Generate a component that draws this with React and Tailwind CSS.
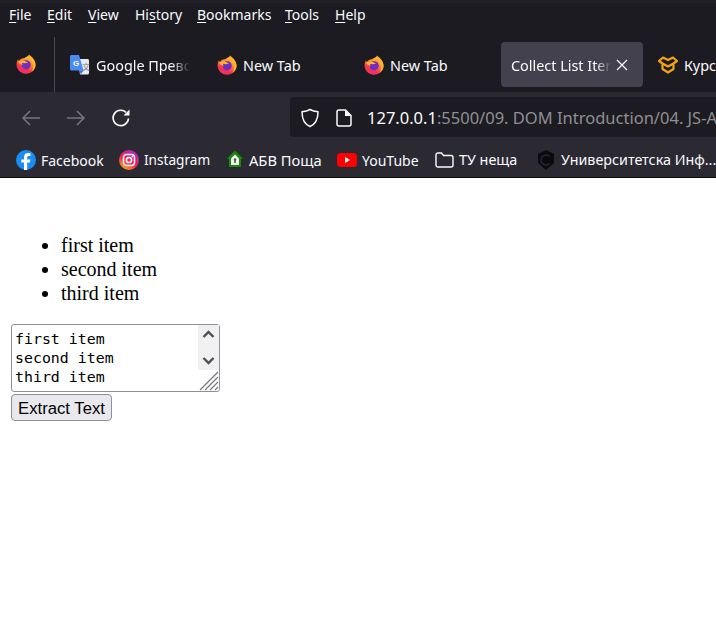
import React from "react";

const ui = { fontFamily: '"Noto Sans", sans-serif' };

function Firefox({ className = "" }) {
  return (
    <svg viewBox="0 0 20 20" width="20" height="20" className={className}>
      <defs>
        <linearGradient id="ffg" x1="0.75" y1="0" x2="0.25" y2="1">
          <stop offset="0" stopColor="#ffd23d" />
          <stop offset="0.4" stopColor="#ff8a2a" />
          <stop offset="0.75" stopColor="#f5304f" />
          <stop offset="1" stopColor="#f0307a" />
        </linearGradient>
      </defs>
      <path d="M13 .5c.4 2 1.600 2.600 3 4.300C17.900 6.800 19.500 8.500 19.500 10.800 19.500 16 15.300 19.700 10 19.700 4.700 19.700.5 15.500.5 10.300.5 8.500 1 6.600 2 5.200l.8 2C4 5 6 4 8 4.200 10 2.500 12.500 2.500 13 .5z" fill="url(#ffg)" />
      <circle cx="10.200" cy="10.800" r="4.600" fill="#6c2fc0" />
      <path d="M2 7.500C4 6.300 6.500 6 9 7l3 1.500c-2.500 1-4.500 1-6 .3L6.500 11C4.500 10.500 3 9.300 2 7.500z" fill="#ffb13a" />
      <path d="M13 .5c3 2.500 6.500 5.500 6.500 10.300 0 3-1.500 5.500-4 7 1.500-2 2-4.500 1.500-7-.5-3-3.500-6-4-10.300z" fill="#ffb52e" />
    </svg>
  );
}

function Translate() {
  return (
    <svg viewBox="0 0 20 20" width="20" height="20">
      <path d="M8 4h9.500c.8 0 1.500.7 1.500 1.500V18c0 .8-.7 1.500-1.500 1.500H10z" fill="#e8eaed" />
      <path d="M1.500 0H9l4.500 15.500H1.500C.7 15.500 0 14.800 0 14V1.500C0 .7.700 0 1.500 0z" fill="#4a8af4" />
      <path d="M10 15.500l.5 4 3-4z" fill="#3367d6" />
      <text x="3" y="10.500" fontSize="8" fontWeight="700" fill="#fff" fontFamily="Liberation Sans, sans-serif">G</text>
      <text x="12" y="15" fontSize="8" fill="#777" fontFamily="Noto Sans CJK SC, sans-serif">文</text>
    </svg>
  );
}

function Tab({ width, icon, text, fade = true }) {
  return (
    <div className={`flex items-center h-[45px] ${width}`}>
      {icon}
      <span
        className={`ml-[6px] pt-[2px] text-[14.4px] whitespace-nowrap overflow-hidden text-[#fbfbfe] ${fade ? "w-[94px] [mask-image:linear-gradient(to_right,#000_80%,transparent)]" : ""}`}
      >
        {text}
      </span>
    </div>
  );
}

function MenuItem({ pre = "", u, post, className }) {
  return (
    <span className={`${className} whitespace-nowrap`}>
      {pre}
      <span className="underline underline-offset-2">{u}</span>
      {post}
    </span>
  );
}

function Bookmark({ icon, text, className = "", textClass = "ml-[5px] text-[14px]" }) {
  return (
    <div className={`flex items-center shrink-0 ${className}`}>
      {icon}
      <span className={`${textClass} text-[#fbfbfe] whitespace-nowrap`}>{text}</span>
    </div>
  );
}

export default function App() {
  return (
    <div className="min-h-[643px] bg-white overflow-hidden w-[716px]">
      <header style={ui} className="bg-[#1c1b22] text-[#fbfbfe]">
        <div className="h-[3px] bg-[#222127]" />
        <nav className="flex h-[24px] items-center pb-[2px] pl-[9px] text-[14px]">
          <MenuItem u="F" post="ile" className="w-[38px]" />
          <MenuItem u="E" post="dit" className="w-[41px]" />
          <MenuItem u="V" post="iew" className="w-[47px]" />
          <MenuItem pre="Hi" u="s" post="tory" className="w-[62px]" />
          <MenuItem u="B" post="ookmarks" className="w-[88px]" />
          <MenuItem u="T" post="ools" className="w-[50px]" />
          <MenuItem u="H" post="elp" />
        </nav>
        <div className="flex h-[65px] items-end">
          <div className="flex items-center w-[55px] h-[55px] pl-[16px] pb-[2px] border-r border-[#4a4950] shrink-0">
            <Firefox />
          </div>
          <div className="flex items-center pl-[15px] pb-[5px] overflow-hidden">
            <Tab width="w-[147px] shrink-0" icon={<Translate />} text="Google Превод" />
            <Tab width="w-[147px] shrink-0" icon={<Firefox />} text="New Tab" fade={false} />
            <Tab width="w-[137px] shrink-0" icon={<Firefox />} text="New Tab" fade={false} />
            <div className="flex items-center h-[45px] w-[142px] shrink-0 rounded-[4px] bg-[#42414d] pl-[10px]">
              <span className="w-[100px] pt-[2px] overflow-hidden whitespace-nowrap text-[14.4px] text-[#fbfbfe] [mask-image:linear-gradient(to_right,#000_85%,transparent)]">
                Collect List Items
              </span>
              <svg width="12" height="12" viewBox="0 0 12 12" className="ml-[5px]" fill="none" stroke="#fbfbfe" strokeWidth="1.300">
                <path d="M1 1l10 10M11 1L1 11" />
              </svg>
            </div>
            <div className="flex items-center h-[45px] ml-[15px] shrink-0">
              <svg width="20" height="20" viewBox="0 0 20 20" fill="none" stroke="#f5a213" strokeWidth="2.200" strokeLinejoin="round">
                <path d="M5 2.500l5 2.500 5-2.500 4 3.500-3.500 2.500V14l-5.500 3.500L4.500 14V8.500L1 6z" />
                <path d="M4.500 8.500L10 11.500l5.500-3" />
              </svg>
              <span className="ml-[6px] pt-[2px] text-[14.4px] text-[#fbfbfe] whitespace-nowrap">Курсове</span>
            </div>
          </div>
        </div>
      </header>

      <div style={ui} className="bg-[#2b2a33] h-[86px] border-b border-[#0c0c0d]">
        <div className="flex items-start h-[51px] pt-[5px]">
          <div className="flex items-center h-[40px] mt-[1px] pl-[22px] w-[290px] shrink-0">
            <svg width="18" height="18" viewBox="0 0 18 18" fill="none" stroke="#77767c" strokeWidth="1.500">
              <path d="M18 9H1M8 2L1 9l7 7" />
            </svg>
            <svg width="18" height="18" viewBox="0 0 18 18" fill="none" stroke="#77767c" strokeWidth="1.500" className="ml-[27px]">
              <path d="M0 9h17M10 2l7 7-7 7" />
            </svg>
            <svg width="18" height="18" viewBox="0 0 18 18" fill="none" stroke="#fbfbfe" strokeWidth="1.600" className="ml-[27px]">
              <path d="M16.500 9.500a7.700 7.700 0 1 1-2.400-6.200" />
              <path d="M17.500.5V6.500h-6z" fill="#fbfbfe" stroke="none" />
            </svg>
          </div>
          <div className="flex items-center h-[40px] grow min-w-0 rounded-l-[4px] bg-[#1c1b22] pl-[10px] overflow-hidden">
            <svg width="20" height="20" viewBox="0 0 20 20" fill="none" stroke="#fbfbfe" strokeWidth="1.500" className="shrink-0 mt-[1px]">
              <path d="M10 1.500c2.500 1.500 5 2 8 2.300 0 7-1.500 12-8 14.700C3.500 15.800 2 10.800 2 3.800c3-.3 5.500-.8 8-2.300z" strokeLinejoin="round" />
            </svg>
            <svg width="16" height="18" viewBox="0 0 16 18" fill="none" stroke="#fbfbfe" strokeWidth="1.500" className="ml-[16px] shrink-0 mt-[1px]">
              <path d="M3 1h6.500L15 6.500V15a2 2 0 0 1-2 2H3a2 2 0 0 1-2-2V3a2 2 0 0 1 2-2z" strokeLinejoin="round" />
              <path d="M9 1v6h6" fill="#fbfbfe" stroke="none" />
            </svg>
            <span className="ml-[15px] pt-[3px] text-[16.5px] whitespace-nowrap text-[#8f8f94]">
              <span className="text-[#fbfbfe]">127.0.0.1</span>:5500/09. DOM Introduction/04. JS-Advanced
            </span>
          </div>
        </div>
        <div className="flex items-center h-[34px] pl-[16px] overflow-hidden">
          <Bookmark
            className="w-[103px]"
            text="Facebook"
            icon={
              <svg width="20" height="20" viewBox="0 0 20 20">
                <circle cx="10" cy="10" r="10" fill="#1b8cf2" />
                <path d="M11.200 20v-7.500h2.700l.5-3h-3.200V7.700c0-1 .5-1.700 1.800-1.700h1.500V3.300c-.7-.1-1.500-.2-2.300-.2-2.600 0-4.200 1.500-4.200 4.200v2.200H5.300v3H8V20z" fill="#fff" />
              </svg>
            }
          />
          <Bookmark
            className="w-[108px]"
            text="Instagram"
            textClass="ml-[5px] text-[13.6px]"
            icon={
              <svg width="20" height="20" viewBox="0 0 20 20">
                <defs>
                  <linearGradient id="ig" x1="0.2" y1="1" x2="0.8" y2="0">
                    <stop offset="0" stopColor="#ffb21a" />
                    <stop offset="0.45" stopColor="#f5204f" />
                    <stop offset="1" stopColor="#a52bd0" />
                  </linearGradient>
                </defs>
                <circle cx="10" cy="10" r="10" fill="url(#ig)" />
                <rect x="4.500" y="4.500" width="11" height="11" rx="3" fill="none" stroke="#fff" strokeWidth="1.500" />
                <circle cx="10" cy="10" r="2.600" fill="none" stroke="#fff" strokeWidth="1.500" />
                <circle cx="13.300" cy="6.700" r=".8" fill="#fff" />
              </svg>
            }
          />
          <Bookmark
            className="w-[110px]"
            text="АБВ Поща"
            textClass="ml-[6px] text-[14.7px]"
            icon={
              <svg width="16" height="18" viewBox="0 0 16 18" className="-mt-[1px]">
                <path d="M8 .5L16 8.500 14 9v8H2V9L0 8.500z" fill="#168a0c" />
                <path d="M8 4.500l4 4v6.500H4V8.500z" fill="#f4f4ee" />
                <circle cx="8" cy="9.500" r="1.300" fill="#555" />
                <rect x="7.200" y="10" width="1.600" height="3" fill="#555" />
              </svg>
            }
          />
          <Bookmark
            className="w-[98px]"
            text="YouTube"
            textClass="ml-[5px] text-[14px]"
            icon={
              <svg width="20" height="14" viewBox="0 0 20 14">
                <rect width="20" height="14" rx="3.500" fill="#ff0000" />
                <path d="M8 4l5 3-5 3z" fill="#fff" />
              </svg>
            }
          />
          <Bookmark
            className="w-[101px]"
            text="ТУ неща"
            textClass="ml-[5px] text-[14.4px]"
            icon={
              <svg width="19" height="16" viewBox="0 0 19 16" fill="none" stroke="#fbfbfe" strokeWidth="1.400" strokeLinejoin="round">
                <path d="M1 3a2 2 0 0 1 2-2h3.500l2 2.500H16a2 2 0 0 1 2 2V13a2 2 0 0 1-2 2H3a2 2 0 0 1-2-2z" />
              </svg>
            }
          />
          <Bookmark
            text="Университетска Инф..."
            textClass="ml-[5px] text-[14.3px]"
            icon={
              <svg width="20" height="20" viewBox="0 0 20 20">
                <path d="M10 0l8 4v9l-8 7-8-7V4z" fill="#0b0b0d" />
                <path d="M13.500 6.500a5 5 0 1 0 0 7" fill="none" stroke="#2b2a33" strokeWidth="1.300" />
              </svg>
            }
          />
        </div>
      </div>

      <main className="pl-[11px] pt-[55px]" style={{ fontFamily: '"Liberation Serif", serif' }}>
        <ul className="list-disc pl-[50px] text-[20px] leading-[24px] text-black">
          <li>first item</li>
          <li>second item</li>
          <li>third item</li>
        </ul>
        <div className="relative w-[209px] h-[68px] mt-[19px]">
          <textarea
            readOnly
            defaultValue={"first item\nsecond item\nthird item"}
            className="block w-full h-full resize-none overflow-hidden rounded-[3px] border border-[#8f8f9d] pl-[3px] pt-[5px] text-[14.9px] leading-[19px] text-black outline-none"
            style={{ fontFamily: '"DejaVu Sans Mono", monospace' }}
          />
          <div className="absolute right-[1px] top-[1px] flex h-[45px] w-[21px] flex-col items-center justify-between bg-[#f0f0f0] py-[5px]">
            <svg width="13" height="9" viewBox="0 0 13 9" fill="none" stroke="#505050" strokeWidth="2.400">
              <path d="M1.500 7L6.500 2l5 5" />
            </svg>
            <svg width="13" height="9" viewBox="0 0 13 9" fill="none" stroke="#505050" strokeWidth="2.400">
              <path d="M1.500 2l5 5 5-5" />
            </svg>
          </div>
          <svg width="20" height="20" viewBox="0 0 20 20" className="absolute right-[1px] bottom-[1px]" stroke="#777" strokeWidth="1.200">
            <path d="M1 19L19 1M6 19L19 6M11 19l8-8M16 19l3-3" />
          </svg>
        </div>
        <button
          type="button"
          className="mt-[2px] block h-[27px] w-[101px] rounded-[4px] border border-[#8f8f9d] bg-[#e9e9ed] pt-[2px] text-[16.7px] leading-[20px] text-black"
          style={{ fontFamily: '"Liberation Sans", sans-serif' }}
        >
          Extract Text
        </button>
      </main>
    </div>
  );
}
